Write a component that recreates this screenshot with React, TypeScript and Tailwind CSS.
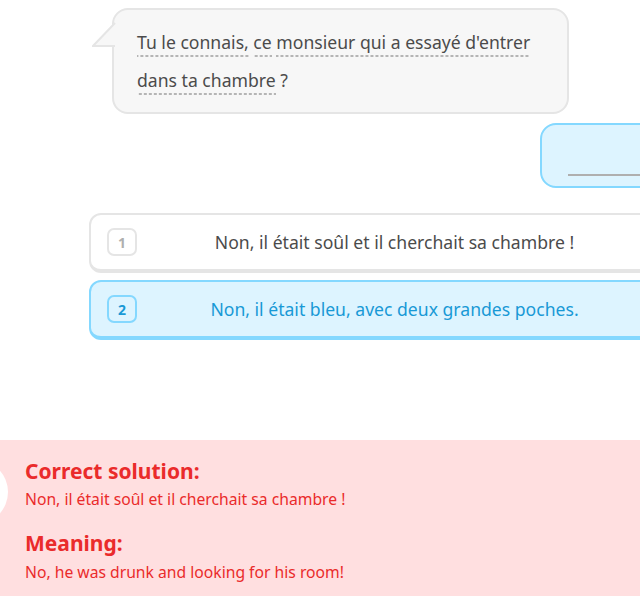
import React from 'react';

const dash =
  'bg-[linear-gradient(to_right,#b5b5b5_3px,transparent_3px)] bg-[length:5px_2px] bg-repeat-x bg-bottom pb-[3px]';

function Token({ children }: { children: React.ReactNode }) {
  return <span className={dash}>{children}</span>;
}

function Option({
  num,
  text,
  active = false,
}: {
  num: number;
  text: string;
  active?: boolean;
}) {
  return (
    <div
      className={`flex items-center h-[60px] w-[611px] rounded-[12px] border-2 border-b-4 px-[16px] ${
        active ? 'bg-[#ddf4ff] border-[#84d8ff]' : 'bg-white border-[#e5e5e5]'
      }`}
    >
      <span
        className={`flex items-center justify-center w-[30px] h-[28px] rounded-[7px] border-2 text-[14px] font-bold ${
          active ? 'border-[#84d8ff] text-[#1899d6]' : 'border-[#e5e5e5] text-[#afafaf]'
        }`}
      >
        {num}
      </span>
      <span
        className={`flex-1 text-center text-[17.6px] pr-[30px] ${
          active ? 'text-[#1899d6]' : 'text-[#4b4b4b]'
        }`}
      >
        {text}
      </span>
    </div>
  );
}

export default function App() {
  return (
    <div
      className="relative w-[640px] h-[596px] overflow-hidden bg-white flex flex-col"
      style={{ fontFamily: '"Noto Sans", Lato, sans-serif' }}
    >
      {/* Prompt bubble */}
      <div className="relative ml-[112px] mt-[8px] w-[457px] rounded-[16px] border-2 border-[#e5e5e5] bg-[#f7f7f7] pl-[23px] pr-[20px] pt-[13px] pb-[13px] text-[17.6px] leading-[38px] text-[#4b4b4b]">
        <svg
          className="absolute left-[-22px] top-[12px]"
          width="24"
          height="26"
          viewBox="0 0 24 26"
        >
          <polygon points="22,1 1,24 22,24" fill="#f7f7f7" />
          <polyline points="23,1 1,24 23,24" fill="none" stroke="#e5e5e5" strokeWidth="2" />
        </svg>
        <Token>Tu le connais,</Token> <Token>ce</Token>{' '}
        <Token>monsieur qui a essayé d'entrer</Token>
        <br />
        <Token>dans ta chambre</Token> ?
      </div>

      {/* Answer slot */}
      <div className="ml-[540px] mt-[9px] w-[160px] h-[65px] rounded-[16px] border-2 border-[#84d8ff] bg-[#ddf4ff] flex items-end pl-[26px] pb-[10px]">
        <div className="w-[72px] h-[2px] bg-[#afafaf]" />
      </div>

      {/* Options */}
      <div className="ml-[89px] mt-[25px] flex flex-col gap-[7px]">
        <Option num={1} text="Non, il était soûl et il cherchait sa chambre !" />
        <Option num={2} text="Non, il était bleu, avec deux grandes poches." active />
      </div>

      {/* Feedback panel */}
      <div className="relative mt-auto h-[156px] bg-[#ffdfe0] pl-[25px] pt-[18px] text-[#ea2b2b]">
        <div className="absolute left-[-56px] top-[20px] w-[64px] h-[64px] rounded-full bg-white" />
        <div className="text-[21px] font-bold leading-[26px]">Correct solution:</div>
        <div className="text-[15.7px] leading-[22px] mt-[4px]">
          Non, il était soûl et il cherchait sa chambre !
        </div>
        <div className="text-[21px] font-bold leading-[26px] mt-[20px]">Meaning:</div>
        <div className="text-[15.7px] leading-[22px] mt-[5px]">
          No, he was drunk and looking for his room!
        </div>
      </div>
    </div>
  );
}
